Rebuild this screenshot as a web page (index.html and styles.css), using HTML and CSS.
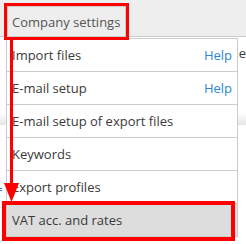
FILE: index.html
```html
<!DOCTYPE html>
<html lang="en">
	<head>
		<meta charset="utf-8">
		<title>Company settings</title>
		<link rel="stylesheet" href="styles.css">
	</head>
	<body>
		<div class="topbar">
			<div class="tab">Company settings</div>
		</div>
		<div class="content">
			<p class="welcome">Online</p>
			<div class="band"></div>
			<div class="dot"></div>
		</div>

		<ul class="menu">
			<li><span>Import files</span><a href="#">Help</a></li>
			<li><span>E-mail setup</span><a href="#">Help</a></li>
			<li><span>E-mail setup of export files</span></li>
			<li><span>Keywords</span></li>
			<li><span>Export profiles</span></li>
			<li class="active"><span>VAT acc. and rates</span></li>
		</ul>

		<div class="mark mark-tab"></div>
		<div class="mark mark-vat"></div>
		<svg class="arrow" width="246" height="244">
			<rect x="10" y="40" width="3" height="146" fill="#f00"/>
			<polygon points="4,183 19,183 11.5,202" fill="#f00"/>
		</svg>
	</body>
</html>
```

FILE: styles.css
```css
body {
	margin: 0;
	font-family: "Open Sans", sans-serif;
	font-size: 13px;
	color: #3a3a3a;
	background-color: #fff;
	overflow: hidden;
}

.topbar {
	height: 37px;
	background-color: #eee;
	border-bottom: 1px solid #ccc;
	padding: 6px 0 0 7px;
	box-sizing: border-box;
}
.tab {
	width: 119px;
	height: 31px;
	box-sizing: border-box;
	border: 1px solid #ccc;
	border-bottom: none;
	padding: 6px 0 0 4px;
	color: #555;
}

.content p {
	margin: 0;
}
.welcome {
	margin-left: 238px !important;
	padding-top: 7px;
	white-space: nowrap;
	overflow: hidden;
	direction: rtl;
}
.band {
	height: 12px;
	margin-top: 51px;
	background: linear-gradient(#fff, #e4e4e4);
}
.dot {
	width: 2px;
	height: 3px;
	margin-top: 63px;
	border-top: 1px solid #2a7bd0;
	border-bottom: 1px solid #2a7bd0;
	box-sizing: border-box;
}

.menu {
	position: absolute;
	left: 6px;
	top: 38px;
	width: 232px;
	box-sizing: border-box;
	margin: 0;
	padding: 0;
	list-style: none;
	background-color: #fff;
	border: 1px solid #ccc;
	border-bottom: none;
}
.menu li {
	display: flex;
	justify-content: space-between;
	align-items: center;
	height: 32px;
	padding: 0 5px;
	border-bottom: 1px solid #ccc;
}
.menu a {
	color: #2a86d6;
	text-decoration: none;
}
.menu .active {
	background-color: #ddd;
}

.mark {
	position: absolute;
	box-sizing: border-box;
	border: 3px solid #f00;
}
.mark-tab {
	left: 4px;
	top: 3px;
	width: 125px;
	height: 37px;
}
.mark-vat {
	left: 2px;
	top: 201px;
	width: 233px;
	height: 40px;
	border-width: 4px;
}
.arrow {
	position: absolute;
	left: 0;
	top: 0;
}
```
